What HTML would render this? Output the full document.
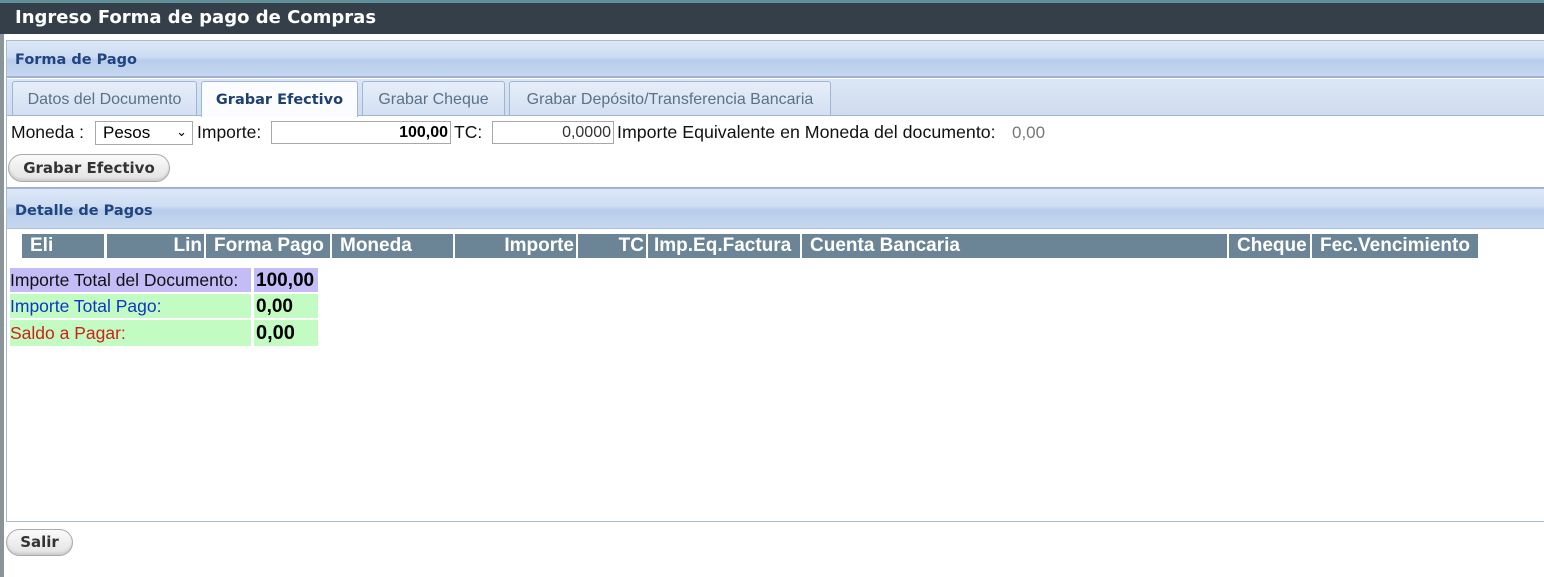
<!DOCTYPE html>
<html><head><meta charset="utf-8"><style>
*{margin:0;padding:0;box-sizing:border-box}
body{width:1544px;height:577px;overflow:hidden;background:#fff;font-family:"Liberation Sans",Arial,sans-serif;position:relative}
.a{position:absolute}
.v{font-family:"DejaVu Sans",Verdana,sans-serif}
.hdr{background:linear-gradient(#dde8f7 0%,#cddcf2 45%,#b8cdeb 55%,#c6d7ef 100%);}
.tab{position:absolute;top:81px;height:34px;border:1px solid #9fb5d6;border-bottom:none;border-radius:3px 3px 0 0;background:linear-gradient(#e6eef9,#d3e0f2);color:#5c7088;font-size:16px;text-align:center;line-height:36px}
.th{position:absolute;top:234px;height:24px;background:#6b8596;color:#fff;font-weight:bold;font-size:19px;line-height:24px;white-space:nowrap;overflow:hidden}
.btn{position:absolute;border:1px solid #aaa;border-radius:14px;background:linear-gradient(#fafafa,#e2e2e2);box-shadow:inset 0 -2px 2px #ccc;font-weight:bold;color:#333;font-size:15px;text-align:center;font-family:"DejaVu Sans",Verdana,sans-serif}
.inp{position:absolute;border:1px solid #a8a8a8;background:#fff;font-size:16px;text-align:right;padding-right:2px;line-height:21px}
.lbl{position:absolute;font-size:17.5px;line-height:22px;color:#111;white-space:nowrap}
</style></head><body>
<div class="a" style="left:0;top:0;width:1544px;height:4px;background:#5e8f99"></div>
<div class="a" style="left:0;top:3px;width:1544px;height:31px;background:#343f4a"></div>
<div class="a v" style="left:15px;top:6px;color:#fff;font-weight:bold;font-size:18px;line-height:24px">Ingreso Forma de pago de Compras</div>
<div class="a" style="left:0;top:34px;width:4px;height:543px;background:#8a9499"></div>
<div class="a" style="left:6px;top:40px;width:1538px;height:482px;border:1px solid #a9bcd4;border-right:none"></div>
<div class="a hdr" style="left:7px;top:41px;width:1537px;height:37px;border-bottom:2px solid #9fb3d6"></div>
<div class="a v" style="left:15px;top:52px;color:#1f4480;font-weight:bold;font-size:14.5px">Forma de Pago</div>
<div class="a" style="left:7px;top:79px;width:1537px;height:37px;background:linear-gradient(#dce6f4,#cfdcef);border-bottom:1px solid #9fb5d6"></div>
<div class="tab" style="left:12px;width:185px">Datos del Documento</div>
<div class="tab v" style="left:201px;width:157px;height:36px;background:#fafcff;color:#1f3f70;font-weight:bold;font-size:14.5px">Grabar Efectivo</div>
<div class="tab" style="left:362px;width:143px">Grabar Cheque</div>
<div class="tab" style="left:509px;width:322px">Grabar Depósito/Transferencia Bancaria</div>
<div class="lbl" style="left:11px;top:121px">Moneda :</div>
<div class="a" style="left:95px;top:121px;width:98px;height:24px;border:1px solid #a8a8a8;font-size:17px;line-height:22px;padding-left:7px">Pesos<span style="position:absolute;right:5px;top:-1px;font-size:13px">&#8964;</span></div>
<div class="lbl" style="left:197px;top:121px">Importe:</div>
<div class="inp" style="left:271px;top:121px;width:180px;height:23px;font-weight:bold">100,00</div>
<div class="lbl" style="left:454px;top:121px">TC:</div>
<div class="inp" style="left:492px;top:121px;width:122px;height:23px;color:#333">0,0000</div>
<div class="lbl" style="left:617px;top:121px;font-size:17.8px">Importe Equivalente en Moneda del documento:</div>
<div class="lbl" style="left:1012px;top:122px;color:#777;font-size:17px">0,00</div>
<div class="btn" style="left:8px;top:154px;width:162px;height:28px;line-height:26px">Grabar Efectivo</div>
<div class="a" style="left:7px;top:187px;width:1537px;height:2px;background:#9fb3d6"></div>
<div class="a hdr" style="left:7px;top:189px;width:1537px;height:40px;border-bottom:1px solid #aac0e0"></div>
<div class="a v" style="left:15px;top:203px;color:#1f4480;font-weight:bold;font-size:14.5px">Detalle de Pagos</div>
<div class="th" style="left:22px;width:82px;padding-left:8px">Eli</div>
<div class="th" style="left:107px;width:97px;text-align:right;padding-right:2px">Lin</div>
<div class="th" style="left:206px;width:124px;padding-left:8px">Forma Pago</div>
<div class="th" style="left:332px;width:121px;padding-left:8px">Moneda</div>
<div class="th" style="left:455px;width:121px;text-align:right;padding-right:2px">Importe</div>
<div class="th" style="left:578px;width:68px;text-align:right;padding-right:2px">TC</div>
<div class="th" style="left:648px;width:152px;padding-left:6px">Imp.Eq.Factura</div>
<div class="th" style="left:802px;width:425px;padding-left:8px">Cuenta Bancaria</div>
<div class="th" style="left:1229px;width:81px;padding-left:8px">Cheque</div>
<div class="th" style="left:1312px;width:166px;padding-left:8px">Fec.Vencimiento</div>
<div class="a" style="left:10px;top:268px;width:241px;height:24px;background:#c3bcf6;font-size:17.5px;line-height:24px;color:#111;white-space:nowrap">Importe Total del Documento:</div>
<div class="a" style="left:254px;top:268px;width:64px;height:24px;background:#c3bcf6;font-size:19px;font-weight:bold;line-height:25px;padding-left:2px">100,00</div>
<div class="a" style="left:10px;top:294px;width:241px;height:24px;background:#c2fcc2;font-size:17.5px;line-height:24px;color:#1035c8">Importe Total Pago:</div>
<div class="a" style="left:254px;top:294px;width:64px;height:24px;background:#c2fcc2;font-size:19px;font-weight:bold;line-height:25px;padding-left:2px">0,00</div>
<div class="a" style="left:10px;top:320px;width:241px;height:26px;background:#c2fcc2;font-size:17.5px;line-height:26px;color:#d0201a">Saldo a Pagar:</div>
<div class="a" style="left:254px;top:320px;width:64px;height:26px;background:#c2fcc2;font-size:20px;font-weight:bold;line-height:27px;padding-left:2px">0,00</div>
<div class="btn" style="left:6px;top:529px;width:67px;height:27px;line-height:25px">Salir</div>
</body></html>
